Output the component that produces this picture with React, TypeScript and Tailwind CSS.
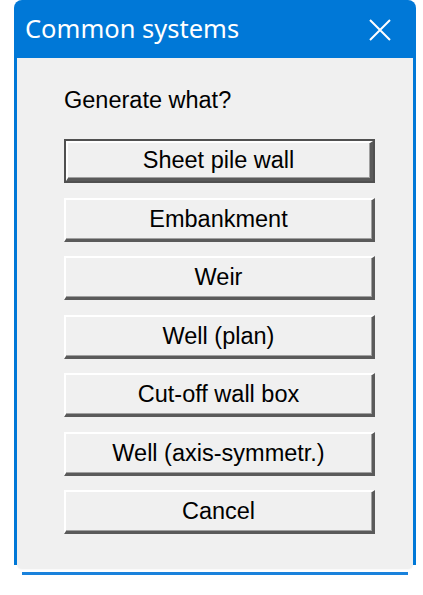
import React from "react";

const labels = [
  "Sheet pile wall",
  "Embankment",
  "Weir",
  "Well (plan)",
  "Cut-off wall box",
  "Well (axis-symmetr.)",
  "Cancel",
];

function Btn({ label, def }: { label: string; def?: boolean }) {
  return (
    <div
      className={
        def
          ? "h-[44px] w-[311px] border-[2px] border-[#505050] bg-[#f0f0f0]"
          : "h-[44px] w-[311px] bg-[#f0f0f0]"
      }
    >
      <div className="h-full w-full border-t-[2px] border-l-[2px] border-r-[3px] border-b-[3px] border-t-white border-l-white border-r-[#5a5a5a] border-b-[#5a5a5a]">
        <div className="h-full w-full pt-[2px] border-b-[1px] border-r-[1px] border-b-[#a0a0a0] border-r-[#a0a0a0] flex items-center justify-center text-[23.5px] text-black leading-none font-['Liberation_Sans',Arial,sans-serif]">
          {label}
        </div>
      </div>
    </div>
  );
}

export default function App() {
  return (
    <div className="w-[423px] h-[595px] bg-white">
      <div className="ml-[14px] w-[402px]">
        <div className="bg-[#0078d7] rounded-t-[8px] px-[3px]">
          <div className="h-[58px] flex items-center justify-between pl-[8px] pr-[22px]">
            <span className="text-white text-[25.5px] leading-none font-['Noto_Sans','Open_Sans',sans-serif] pb-[1px]">
              Common systems
            </span>
            <svg width="22" height="22" viewBox="0 0 22 22" className="mt-[1px]">
              <path d="M1 1 L21 21 M21 1 L1 21" stroke="white" strokeWidth="2" />
            </svg>
          </div>
          <div className="bg-[#f0f0f0] h-[507px] flex flex-col pl-[47px]">
            <div className="pt-[31px] h-[81px] text-[23.5px] leading-none text-black font-['Liberation_Sans',Arial,sans-serif]">
              Generate what?
            </div>
            <div className="flex flex-col gap-[14.5px]">
              {labels.map((l, i) => (
                <Btn key={l} label={l} def={i === 0} />
              ))}
            </div>
          </div>
        </div>
        <div className="mx-[3px] h-[5px] bg-[#f0f0f0] rounded-b-[6px] border-b border-[#fafafa]" />
        <div className="mx-[8px] h-[3px] bg-[#1a82dc] mt-[2px]" />
      </div>
    </div>
  );
}
